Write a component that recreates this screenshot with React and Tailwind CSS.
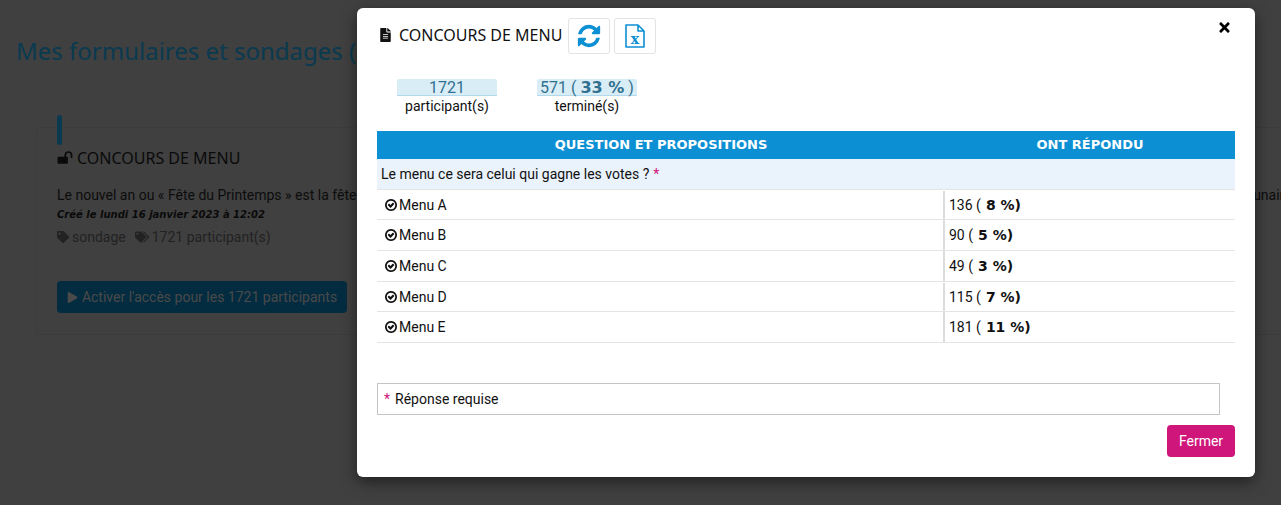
import React from "react";
import { FaFileAlt, FaTag, FaTags, FaPlay, FaTimes } from "react-icons/fa";

const font = { fontFamily: "Roboto,'Liberation Sans',sans-serif" };
const titleFont = { fontFamily: "'Noto Sans','Liberation Sans',sans-serif" };
const boldFont = { fontFamily: "'DejaVu Sans',sans-serif" };
const rows = [
  ["Menu A", "136", "8 %"],
  ["Menu B", "90", "5 %"],
  ["Menu C", "49", "3 %"],
  ["Menu D", "115", "7 %"],
  ["Menu E", "181", "11 %"],
];
const rowH = ["h-[30px] pt-[1px]", "h-[31px]", "h-[31px]", "h-[30px] pt-[1px]", "h-[31px]"];

function Fa4({ d, className }) {
  return (
    <svg viewBox="0 0 1792 1792" fill="currentColor" className={className}>
      <path d={d} />
    </svg>
  );
}
const REFRESH = "M1639 1056q0 5-1 7-64 268-268 434.5t-478 166.5q-146 0-282.5-55t-243.5-157l-129 129q-19 19-45 19t-45-19-19-45v-448q0-26 19-45t45-19h448q26 0 45 19t19 45-19 45l-137 137q71 66 161 102t187 36q134 0 250-65t186-179q11-17 53-117 8-23 30-23h192q13 0 22.5 9.5t9.5 22.5zm25-800v448q0 26-19 45t-45 19h-448q-26 0-45-19t-19-45 19-45l138-138q-148-137-349-137-134 0-250 65t-186 179q-11 17-53 117-8 23-30 23h-199q-13 0-22.5-9.5t-9.5-22.5v-7q65-268 270-434.5t480-166.5q146 0 284 55.5t245 156.5l130-129q19-19 45-19t45 19 19 45z";
const CHECK = "M1299 813l-422 422q-19 19-45 19t-45-19l-294-294q-19-19-19-45t19-45l102-102q19-19 45-19t45 19l147 147 275-275q19-19 45-19t45 19l102 102q19 19 19 45t-19 45zm141 83q0-148-73-273t-198-198-273-73-273 73-198 198-73 273 73 273 198 198 273 73 273-73 198-198 73-273zm224 0q0 209-103 385.5t-279.5 279.5-385.5 103-385.5-103-279.5-279.5-103-385.5 103-385.5 279.5-279.5 385.5-103 385.5 103 279.5 279.5 103 385.5z";
const UNLOCK = "M1728 576v256q0 26-19 45t-45 19h-64q-26 0-45-19t-19-45v-256q0-106-75-181t-181-75-181 75-75 181v192h96q40 0 68 28t28 68v576q0 40-28 68t-68 28h-960q-40 0-68-28t-28-68v-576q0-40 28-68t68-28h672v-192q0-185 131.5-316.5t316.5-131.5 316.5 131.5 131.5 316.5z";

function ExcelIcon() {
  return (
    <svg width="20" height="24" viewBox="0 0 20 24" fill="none">
      <path d="M1 1h12l6 6v16H1z M13 1v6h6" stroke="#0d8fd3" strokeWidth="1.6" strokeLinejoin="round" />
      <text x="10" y="20" textAnchor="middle" fontFamily="'DejaVu Serif',serif" fontWeight="700" fontSize="14" fill="#0d8fd3">x</text>
    </svg>
  );
}

export default function App() {
  return (
    <div className="relative h-[505px] w-full overflow-hidden bg-[#404040] text-[14px] text-[#111]" style={font}>
      <div className="flex flex-col pt-[7px]">
        <h1 className="mt-[27px] ml-4 whitespace-nowrap text-[24px] leading-[34px] text-[#0a3a50]" style={titleFont}>Mes formulaires et sondages (1)</h1>
        <div className="mt-[59px] ml-9 h-[208px] w-[1300px] rounded-[3px] border border-[#3c3c3c] pl-[20px]">
          <div className="-mt-[13px] h-[30px] w-[5px] rounded-full bg-[#0a3a50]" />
          <div className="mt-[2px] flex items-center gap-[4px] text-[16px] leading-[22px] text-[#0a0a0a]" style={titleFont}>
            <Fa4 d={UNLOCK} className="h-[16px] w-[16px]" />
            <span>CONCOURS DE MENU</span>
          </div>
          <p className="mt-[16px] whitespace-nowrap leading-[20px] text-[#0c0c0c]">Le nouvel an ou « Fête du Printemps » est la fête la plus importante du calendrier traditionnel chinois, célébrée, chaque année, en Chine, au premier jour du premier mois de l'année du calendrier lunaire</p>
          <p className="mt-[2px] whitespace-nowrap text-[10px] leading-[16px] font-bold italic text-[#0a0a0a]" style={boldFont}>Créé le lundi 16 janvier 2023 à 12:02</p>
          <div className="mt-[4px] flex items-center gap-[9px] leading-[20px] text-[#222]">
            <span className="flex items-center gap-[3px]"><FaTag className="h-3 w-3" />sondage</span>
            <span className="flex items-center gap-[3px]"><FaTags className="h-3 w-[14px]" />1721 participant(s)</span>
          </div>
          <div className="mt-[34px] flex h-[32px] w-[290px] items-center justify-center gap-[4px] rounded-[4px] bg-[#042c40] text-[#4a4a4a]">
            <FaPlay className="h-[11px] w-[11px]" />
            <span>Activer l'accès pour les 1721 participants</span>
          </div>
        </div>
      </div>

      <div className="absolute top-2 left-[357px] flex h-[469px] w-[898px] flex-col rounded-[6px] bg-white px-5 shadow-[0_5px_15px_rgba(0,0,0,0.5)]">
        <FaTimes className="absolute top-[12px] right-[23px] h-[15px] w-[15px] text-black" />
        <div className="mt-[10px] flex items-center pl-[3px]">
          <FaFileAlt className="mb-[2px] h-[14px] w-[11px] text-[#111]" />
          <span className="mb-[2px] ml-2 text-[16px] leading-[22px] text-[#111]" style={titleFont}>CONCOURS DE MENU</span>
          <div className="ml-[6px] flex gap-1">
            <div className="flex h-9 w-[42px] items-center justify-center rounded-[3px] border border-[#e3e3e3]">
              <Fa4 d={REFRESH} className="h-[26px] w-[26px] text-[#0d8fd3]" />
            </div>
            <div className="flex h-9 w-[42px] items-center justify-center rounded-[3px] border border-[#e3e3e3]">
              <ExcelIcon />
            </div>
          </div>
        </div>

        <div className="mt-[25px] ml-5 flex gap-10 text-center">
          {[["1721", null], ["571 ( ", "33 %"]].map(([a, b], i) => (
            <div key={i} className="w-[100px]">
              <div className="h-[17px] whitespace-nowrap rounded-t-[2px] border-b border-[#b5d9ec] bg-[#d9edf7] text-[16px] leading-[17px] text-[#31708f]">
                {a}{b && <b className="text-[16px]" style={boldFont}>{b}</b>}{b && " )"}
              </div>
              <div className="leading-[20px] text-[#111]">{i === 0 ? "participant(s)" : "terminé(s)"}</div>
            </div>
          ))}
        </div>

        <div className="mt-[15px] flex h-7 items-center bg-[#0d8fd3] text-center text-[13px] font-bold text-white" style={boldFont}>
          <div className="w-[568px]">QUESTION ET PROPOSITIONS</div>
          <div className="flex-1">ONT RÉPONDU</div>
        </div>
        <div className="flex h-[31px] items-center border-b border-[#e4e4e4] bg-[#eaf2fc] pl-1">
          Le menu ce sera celui qui gagne les votes ?<span className="ml-1 text-[#cf167a]">*</span>
        </div>
        {rows.map(([n, v, p], i) => (
          <div key={n} className={`flex border-b-[1.5px] border-[#e4e4e4] ${rowH[i]}`}>
            <div className="flex w-[568px] items-center gap-[1px] border-r-2 border-[#dcdcdc] pl-[7px]">
              <Fa4 d={CHECK} className="h-[14px] w-[14px] text-[#111]" />
              <span>{n}</span>
            </div>
            <div className="flex items-center pl-[4px]">
              <span>{v} ( </span>
              <b className="ml-[5px] text-[14px]" style={boldFont}>{p})</b>
            </div>
          </div>
        ))}

        <div className="mt-[40px] flex h-8 w-[843px] items-center border border-[#c4c4c4] pl-[6px]">
          <span className="mr-[5px] text-[#cf167a]">*</span>Réponse requise
        </div>
        <div className="mt-[10px] flex justify-end">
          <button className="h-8 w-[68px] rounded-[4px] bg-[#cf167a] text-white">Fermer</button>
        </div>
      </div>
    </div>
  );
}
